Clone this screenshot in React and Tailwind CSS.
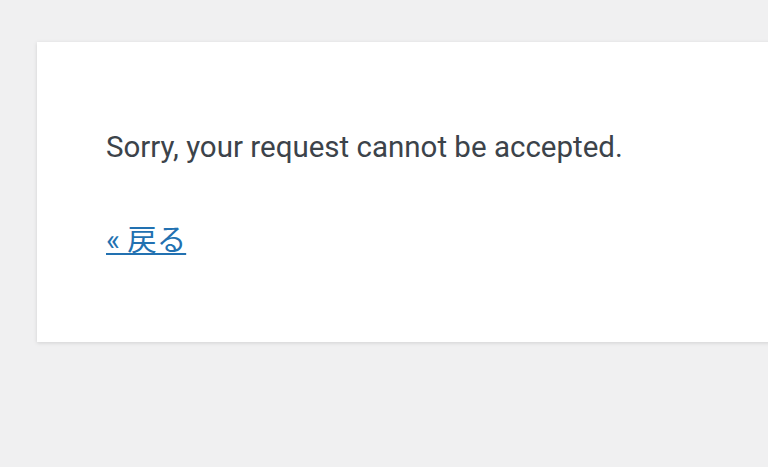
import React from 'react';

const App = () => {
  return (
    <div className="h-[467px] w-[768px] overflow-hidden bg-[#f0f0f1] pt-[42px] pl-[37px] font-['Roboto','Noto_Sans_CJK_JP',sans-serif]">
      {/* Message box */}
      <div className="w-[780px] h-[300px] bg-white shadow-[0_1px_4px_rgba(0,0,0,0.13)] pt-[83px] pl-[69px] text-[29.5px] leading-[44px] text-[#3c434a]">
        <p>Sorry, your request cannot be accepted.</p>
        <p className="mt-[49px]">
          <a href="#" className="text-[#2271b1] underline underline-offset-[3px]">
            « 戻る
          </a>
        </p>
      </div>
    </div>
  );
};

export default App;
